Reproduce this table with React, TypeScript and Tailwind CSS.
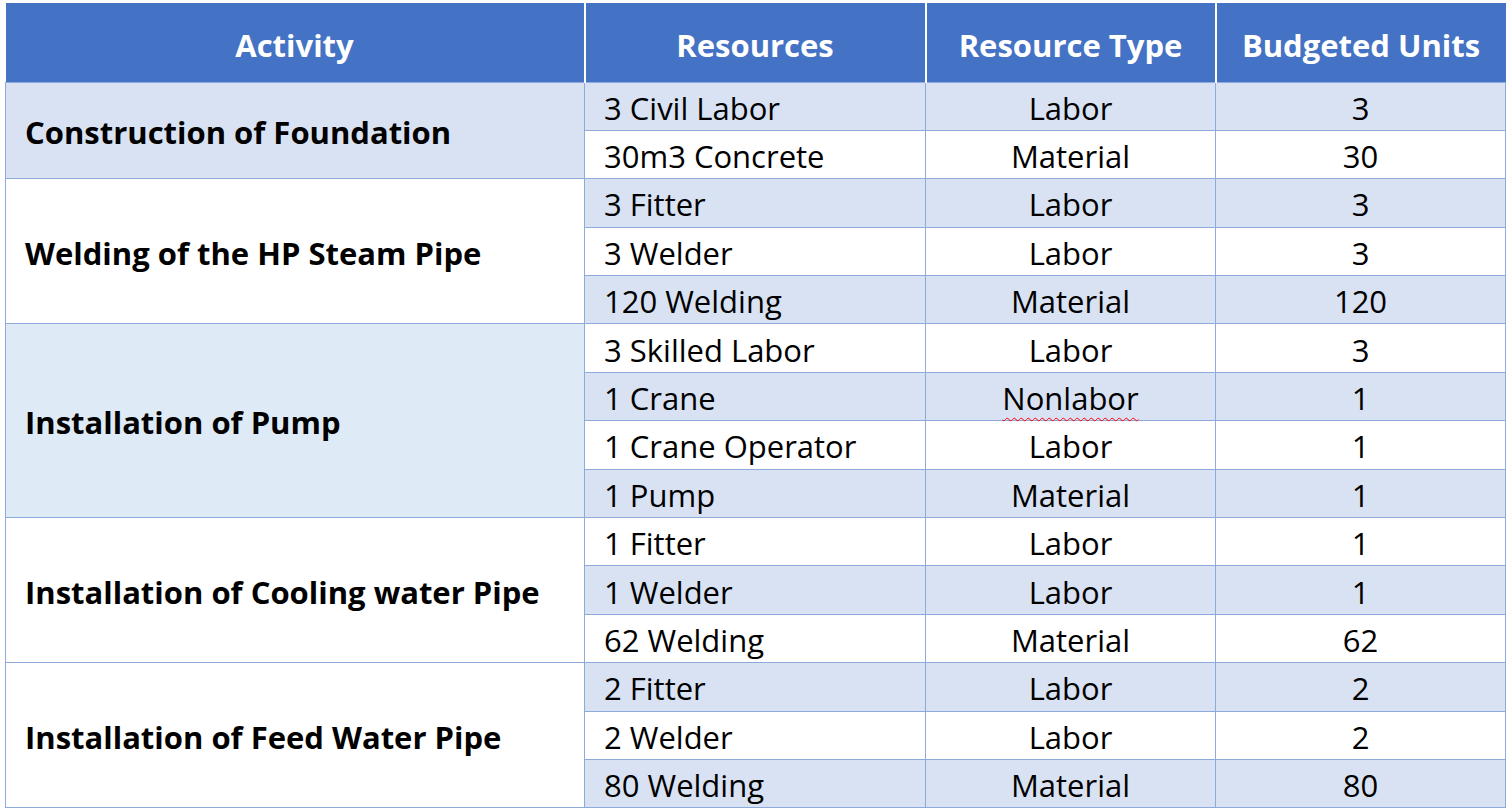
import React from 'react';

type Resource = {
  name: string;
  type: string;
  units: number;
};

type Activity = {
  title: string;
  cellBg: string;
  resources: Resource[];
};

const activities: Activity[] = [
  {
    title: 'Construction of Foundation',
    cellBg: 'bg-[#d9e2f3]',
    resources: [
      { name: '3 Civil Labor', type: 'Labor', units: 3 },
      { name: '30m3 Concrete', type: 'Material', units: 30 },
    ],
  },
  {
    title: 'Welding of the HP Steam Pipe',
    cellBg: 'bg-white',
    resources: [
      { name: '3 Fitter', type: 'Labor', units: 3 },
      { name: '3 Welder', type: 'Labor', units: 3 },
      { name: '120 Welding', type: 'Material', units: 120 },
    ],
  },
  {
    title: 'Installation of Pump',
    cellBg: 'bg-[#deeaf6]',
    resources: [
      { name: '3 Skilled Labor', type: 'Labor', units: 3 },
      { name: '1 Crane', type: 'Nonlabor', units: 1 },
      { name: '1 Crane Operator', type: 'Labor', units: 1 },
      { name: '1 Pump', type: 'Material', units: 1 },
    ],
  },
  {
    title: 'Installation of Cooling water Pipe',
    cellBg: 'bg-white',
    resources: [
      { name: '1 Fitter', type: 'Labor', units: 1 },
      { name: '1 Welder', type: 'Labor', units: 1 },
      { name: '62 Welding', type: 'Material', units: 62 },
    ],
  },
  {
    title: 'Installation of Feed Water Pipe',
    cellBg: 'bg-white',
    resources: [
      { name: '2 Fitter', type: 'Labor', units: 2 },
      { name: '2 Welder', type: 'Labor', units: 2 },
      { name: '80 Welding', type: 'Material', units: 80 },
    ],
  },
];

// word-style cell: thin light blue grid, text sits a little low
const cell = 'border border-[#8eaadb] pt-[4px] pb-0 leading-none';
const head = 'pt-[5px] text-center font-bold';

const App: React.FC = () => {
  let rowIndex = 0;

  return (
    <div className="min-h-[811px] w-[1510px] bg-white pl-[5px] pt-[3px] font-['Open_Sans','Lato',sans-serif] text-black">
      <table className="w-[1500px] table-fixed border-collapse text-[31px]">
        <colgroup>
          <col className="w-[579px]" />
          <col className="w-[341px]" />
          <col className="w-[290px]" />
          <col className="w-[290px]" />
        </colgroup>
        <thead>
          <tr className="h-[79px] bg-[#4472c4] text-white">
            <th className={`${head} border-r-2 border-white`}>Activity</th>
            <th className={`${head} border-x-2 border-white`}>Resources</th>
            <th className={`${head} border-x-2 border-white`}>Resource Type</th>
            <th className={`${head} border-l-2 border-white`}>Budgeted Units</th>
          </tr>
        </thead>
        <tbody>
          {activities.map((activity) =>
            activity.resources.map((res, i) => {
              const shaded = rowIndex % 2 === 0;
              rowIndex += 1;
              const rowBg = shaded ? 'bg-[#d9e2f3]' : 'bg-white';
              return (
                <tr key={activity.title + res.name} className="h-[48.4px]">
                  {i === 0 && (
                    <td
                      rowSpan={activity.resources.length}
                      className={`${cell} ${activity.cellBg} pl-[19px] text-left font-bold whitespace-nowrap`}
                    >
                      {activity.title}
                    </td>
                  )}
                  <td className={`${cell} ${rowBg} pl-[19px] text-left whitespace-nowrap`}>{res.name}</td>
                  <td className={`${cell} ${rowBg} text-center`}>
                    {res.type === 'Nonlabor' ? (
                      <span className="underline decoration-wavy decoration-[#ff0000] decoration-1 underline-offset-[7px]">
                        {res.type}
                      </span>
                    ) : (
                      res.type
                    )}
                  </td>
                  <td className={`${cell} ${rowBg} text-center`}>{res.units}</td>
                </tr>
              );
            }),
          )}
        </tbody>
      </table>
    </div>
  );
};

export default App;
